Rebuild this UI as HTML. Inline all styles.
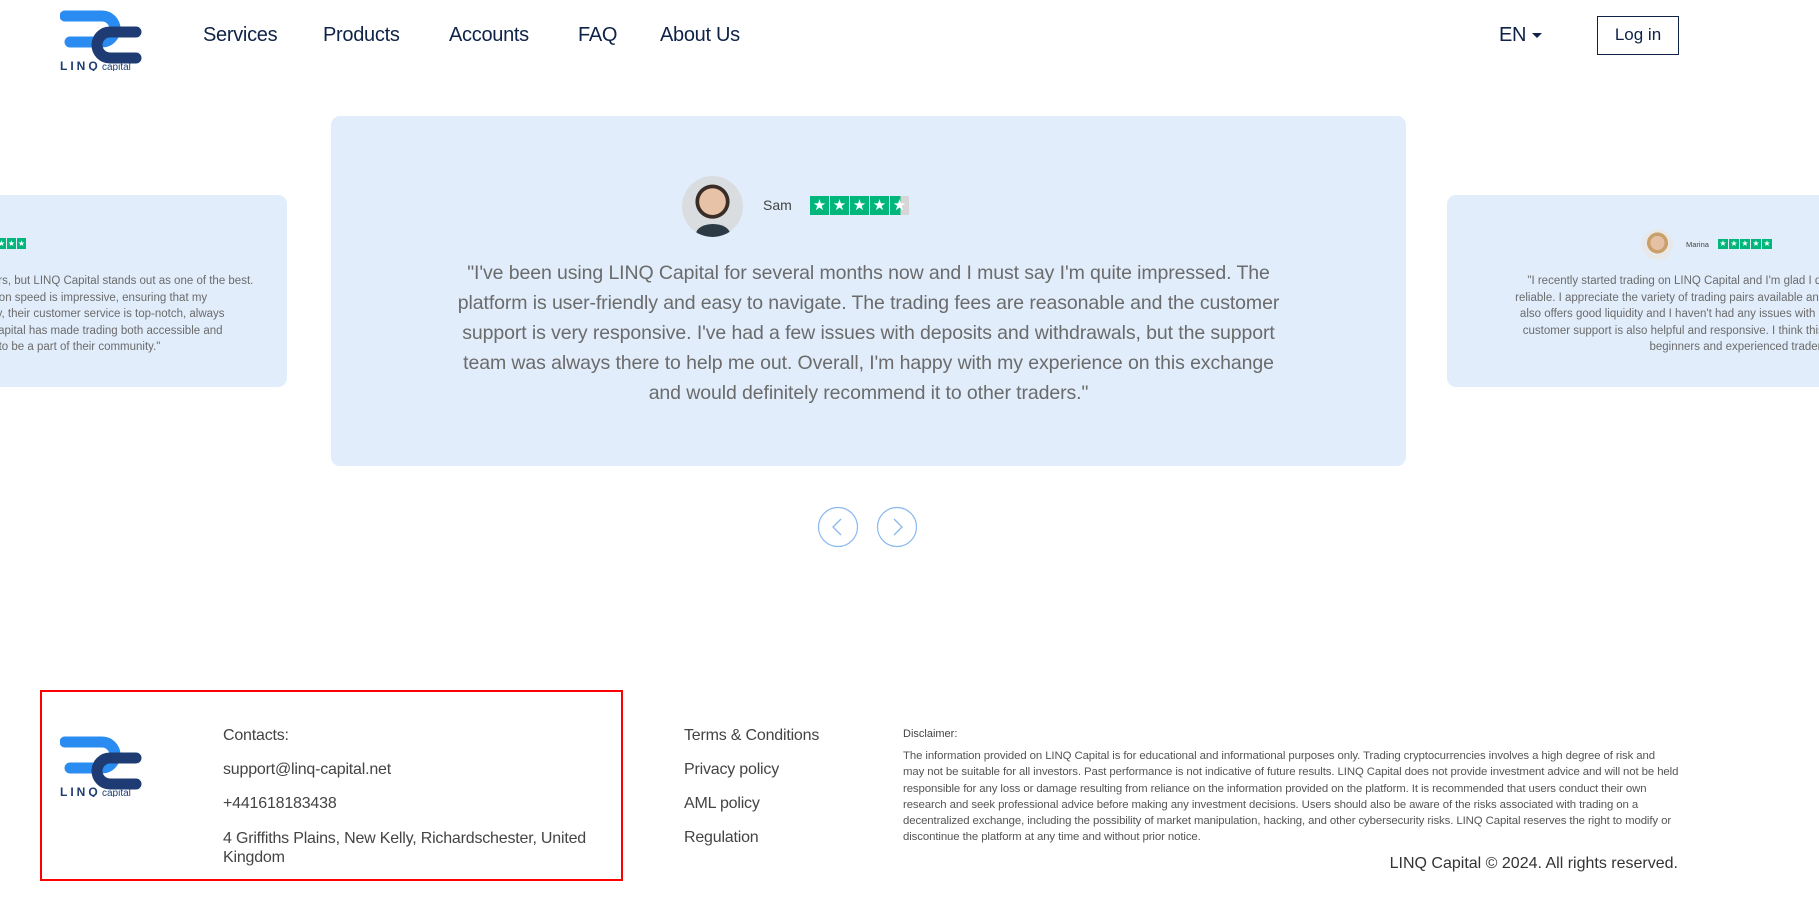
<!DOCTYPE html>
<html><head><meta charset="utf-8"><style>
*{margin:0;padding:0;box-sizing:border-box}
html,body{width:1819px;height:898px;overflow:hidden}
body{background:#fff;font-family:"Liberation Sans",Arial,sans-serif;position:relative;color:#333}
.wrap{position:absolute;left:0;top:0;width:1819px;height:898px;overflow:hidden}
.a{position:absolute}
.nav{font-size:20px;color:#0f2347;top:24px;letter-spacing:-0.3px}
.card{background:#e1edfb;border-radius:9px;position:absolute}
.stars{display:flex;gap:1px;position:absolute}
.stars span{background:#00b67a;color:#fff;display:flex;align-items:center;justify-content:center;line-height:1}
.q{color:#6b6b6b;text-align:center;position:absolute}
.ft{font-size:16px;color:#444;letter-spacing:-0.2px}
</style></head><body><div class="wrap">

<svg class="a" style="left:60px;top:9px" width="82" height="62" viewBox="0 0 82 62">
<path d="M5 7 H42 A13 13 0 0 1 42 33 H10" fill="none" stroke="#2a8cf0" stroke-width="11" stroke-linecap="round"/>
<path d="M76 23 H50 A13 13 0 0 0 50 49 H76" fill="none" stroke="#1e3c73" stroke-width="11" stroke-linecap="round"/>
<text x="0" y="61" font-family="Liberation Sans" font-size="12" font-weight="bold" fill="#1e3c73" letter-spacing="3">LINQ</text>
<text x="42" y="61" font-family="Liberation Sans" font-size="10" fill="#1e3c73">capital</text>
</svg>

<div class="a nav" style="left:203px">Services</div>
<div class="a nav" style="left:323px">Products</div>
<div class="a nav" style="left:449px">Accounts</div>
<div class="a nav" style="left:578px">FAQ</div>
<div class="a nav" style="left:660px">About Us</div>
<div class="a nav" style="left:1499px">EN</div>
<div class="a" style="left:1532px;top:33px;border-left:5px solid transparent;border-right:5px solid transparent;border-top:5px solid #0f2347"></div>
<div class="a" style="left:1597px;top:16px;width:82px;height:39px;border:1.5px solid #0f2347;font-size:17px;color:#0f2347;text-align:center;line-height:36px">Log in</div>

<div class="card" style="left:-303px;top:195px;width:590px;height:192px;overflow:hidden">
  <div class="stars" style="left:280px;top:43px"><span style="width:9px;height:11px;font-size:8px">★</span><span style="width:9px;height:11px;font-size:8px">★</span><span style="width:9px;height:11px;font-size:8px">★</span><span style="width:9px;height:11px;font-size:8px">★</span><span style="width:9px;height:11px;font-size:8px">★</span></div>
  <div class="q" style="left:0;width:590px;top:78px;font-size:11.5px;line-height:16.5px;padding:0 20px 0 40px">"I have tried many trading platforms over the years, but LINQ Capital stands out as one of the best.<br>The interface is intuitive and the execution speed is impressive, ensuring that my<br>trades are placed without delay. Additionally, their customer service is top-notch, always<br>ready to assist with any questions. LINQ Capital has made trading both accessible and<br>profitable for me, and I'm glad to be a part of their community."</div>
</div>

<div class="card" style="left:331px;top:116px;width:1075px;height:350px">
  <div class="a" style="left:351px;top:60px;width:61px;height:61px;border-radius:50%;background:radial-gradient(circle at 50% 42%,#e8c2a6 0 28%,#3a2d27 29% 36%,#d9dde0 37%);overflow:hidden">
    <div class="a" style="left:14px;top:48px;width:34px;height:20px;border-radius:50% 50% 0 0;background:#2c3a44"></div>
  </div>
  <div class="a" style="left:432px;top:81px;font-size:14px;color:#444">Sam</div>
  <div class="stars" style="left:479px;top:80px"><span style="width:19px;height:19px;font-size:15px">★</span><span style="width:19px;height:19px;font-size:15px">★</span><span style="width:19px;height:19px;font-size:15px">★</span><span style="width:19px;height:19px;font-size:15px">★</span><span style="width:19px;height:19px;font-size:15px;background:linear-gradient(90deg,#00b67a 55%,#d6d6d6 55%)">★</span></div>
  <div class="q" style="left:0;width:1075px;top:142px;font-size:19.5px;line-height:30px;letter-spacing:-0.1px">"I've been using LINQ Capital for several months now and I must say I'm quite impressed. The<br>platform is user-friendly and easy to navigate. The trading fees are reasonable and the customer<br>support is very responsive. I've had a few issues with deposits and withdrawals, but the support<br>team was always there to help me out. Overall, I'm happy with my experience on this exchange<br>and would definitely recommend it to other traders."</div>
</div>

<div class="card" style="left:1447px;top:195px;width:590px;height:192px;overflow:hidden">
  <div class="a" style="left:195px;top:34px;width:31px;height:31px;border-radius:50%;background:radial-gradient(circle at 50% 45%,#e6c0a2 0 30%,#c9a06a 31% 45%,#e8e8e8 46%)"></div>
  <div class="a" style="left:239px;top:45px;font-size:7.5px;color:#444">Marina</div>
  <div class="stars" style="left:271px;top:44px"><span style="width:10px;height:10px;font-size:8px">★</span><span style="width:10px;height:10px;font-size:8px">★</span><span style="width:10px;height:10px;font-size:8px">★</span><span style="width:10px;height:10px;font-size:8px">★</span><span style="width:10px;height:10px;font-size:8px">★</span></div>
  <div class="q" style="left:0;width:590px;top:78px;font-size:11.5px;line-height:16.5px;padding:0 25px">"I recently started trading on LINQ Capital and I'm glad I did. The platform is fast and<br>reliable. I appreciate the variety of trading pairs available and the low fees. The exchange<br>also offers good liquidity and I haven't had any issues with deposits or withdrawals. The<br>customer support is also helpful and responsive. I think this is a great platform for both<br>beginners and experienced traders."</div>
</div>

<svg class="a" style="left:817px;top:506px" width="100" height="42" viewBox="0 0 100 42">
<circle cx="21" cy="21" r="19.5" fill="none" stroke="#8ab9ee" stroke-width="1.2"/>
<path d="M24 13 L16 21 L24 29" fill="none" stroke="#8ab9ee" stroke-width="1.3"/>
<circle cx="80" cy="21" r="19.5" fill="none" stroke="#8ab9ee" stroke-width="1.2"/>
<path d="M77 13 L85 21 L77 29" fill="none" stroke="#8ab9ee" stroke-width="1.3"/>
</svg>

<div class="a" style="left:40px;top:690px;width:583px;height:191px;border:2.5px solid #f00"></div>
<svg class="a" style="left:60px;top:735px" width="82" height="62" viewBox="0 0 82 62">
<path d="M5 7 H42 A13 13 0 0 1 42 33 H10" fill="none" stroke="#2a8cf0" stroke-width="11" stroke-linecap="round"/>
<path d="M76 23 H50 A13 13 0 0 0 50 49 H76" fill="none" stroke="#1e3c73" stroke-width="11" stroke-linecap="round"/>
<text x="0" y="61" font-family="Liberation Sans" font-size="12" font-weight="bold" fill="#1e3c73" letter-spacing="3">LINQ</text>
<text x="42" y="61" font-family="Liberation Sans" font-size="10" fill="#1e3c73">capital</text>
</svg>
<div class="a ft" style="left:223px;top:727px">Contacts:</div>
<div class="a ft" style="left:223px;top:761px">support@linq-capital.net</div>
<div class="a ft" style="left:223px;top:795px">+441618183438</div>
<div class="a ft" style="left:223px;top:829px;line-height:19px;width:380px">4 Griffiths Plains, New Kelly, Richardschester, United Kingdom</div>
<div class="a ft" style="left:684px;top:727px">Terms &amp; Conditions</div>
<div class="a ft" style="left:684px;top:761px">Privacy policy</div>
<div class="a ft" style="left:684px;top:795px">AML policy</div>
<div class="a ft" style="left:684px;top:829px">Regulation</div>
<div class="a" style="left:903px;top:728px;font-size:11px;color:#444">Disclaimer:</div>
<div class="a" style="left:903px;top:748px;width:776px;font-size:11.4px;line-height:16.3px;color:#555;letter-spacing:-0.1px">The information provided on LINQ Capital is for educational and informational purposes only. Trading cryptocurrencies involves a high degree of risk and may not be suitable for all investors. Past performance is not indicative of future results. LINQ Capital does not provide investment advice and will not be held responsible for any loss or damage resulting from reliance on the information provided on the platform. It is recommended that users conduct their own research and seek professional advice before making any investment decisions. Users should also be aware of the risks associated with trading on a decentralized exchange, including the possibility of market manipulation, hacking, and other cybersecurity risks. LINQ Capital reserves the right to modify or discontinue the platform at any time and without prior notice.</div>
<div class="a" style="right:141px;top:855px;font-size:16px;color:#333">LINQ Capital © 2024. All rights reserved.</div>
</div></body></html>
